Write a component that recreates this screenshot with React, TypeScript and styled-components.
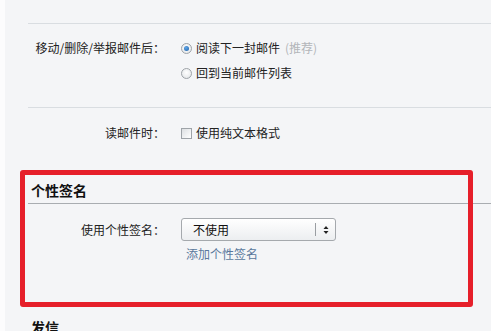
import React from "react";
import styled, { createGlobalStyle } from "styled-components";

const Global = createGlobalStyle`
  html, body { margin: 0; padding: 0; }
  body {
    width: 491px; height: 331px; overflow: hidden;
    font-family: "Noto Sans CJK SC", "Noto Sans", sans-serif;
    font-size: 12px; color: #222;
  }
`;

const Page = styled.div`
  position: relative;
  height: 331px;
  overflow: hidden;
  background: #f4f5f7;
  border-left: 5px solid #fcfcfd;
  box-sizing: border-box;
`;

const Rule = styled.div<{ $top: number }>`
  margin: ${(p) => p.$top}px 0 0 23px;
  height: 1px;
  background: #d9dde1;
`;

const FieldRow = styled.div<{ $top: number }>`
  display: grid;
  grid-template-columns: 137px 1fr;
  column-gap: 16px;
  align-items: start;
  margin: ${(p) => p.$top}px 0 0 23px;
`;

const Label = styled.div<{ $lh?: number }>`
  text-align: right;
  line-height: ${(p) => p.$lh || 20}px;
  color: #222;
  white-space: nowrap;
`;

const Options = styled.div`
  display: flex;
  flex-direction: column;
  gap: 5px;
`;

const Option = styled.label`
  display: flex;
  align-items: center;
  gap: 4px;
  line-height: 20px;
  color: #222;
  white-space: nowrap;
`;

const Radio = styled.span<{ $on?: boolean }>`
  width: 11px;
  height: 11px;
  border-radius: 50%;
  box-sizing: border-box;
  border: 1px solid #9ea3a8;
  background: radial-gradient(circle at 50% 40%, #ffffff, #dfe2e5);
  display: flex;
  align-items: center;
  justify-content: center;
  &::after {
    content: "";
    display: ${(p) => (p.$on ? "block" : "none")};
    width: 5px;
    height: 5px;
    border-radius: 50%;
    background: radial-gradient(circle at 40% 35%, #5fa6e8, #1d5fa6);
  }
`;

const Check = styled.span`
  width: 11px;
  height: 11px;
  box-sizing: border-box;
  border: 1px solid #9ea3a8;
  background: linear-gradient(135deg, #dcdfe2, #ffffff);
`;

const Hint = styled.span`
  color: #b3b6ba;
  margin-left: 1px;
`;

const Heading = styled.div<{ $top: number; $line?: boolean }>`
  margin: ${(p) => p.$top}px 0 0 23px;
  padding: 0 0 3px 3px;
  font-size: 14px;
  font-weight: 700;
  line-height: 20px;
  color: #111;
  border-bottom: ${(p) => (p.$line ? "1px solid #a9adb1" : "none")};
`;

const Select = styled.div`
  width: 155px;
  height: 23px;
  box-sizing: border-box;
  border: 1px solid #a5a9ad;
  border-radius: 3px;
  background: linear-gradient(#ffffff, #eceef0);
  display: flex;
  align-items: center;
  padding-left: 11px;
  color: #111;
`;

const SelectText = styled.span`
  flex: 1;
  line-height: 20px;
`;

const SelectDivider = styled.span`
  width: 1px;
  height: 13px;
  background: #9a9ea2;
`;

const Arrows = styled.span`
  width: 19px;
  display: flex;
  justify-content: center;
`;

const Link = styled.a`
  display: block;
  margin: 5px 0 0 5px;
  line-height: 16px;
  color: #5a789c;
  text-decoration: none;
`;

const Annotation = styled.div`
  position: absolute;
  left: 15px;
  top: 170px;
  width: 453px;
  height: 137px;
  box-sizing: border-box;
  border: 5px solid #e61f2a;
  border-radius: 3px;
  pointer-events: none;
`;

export default function App() {
  return (
    <>
      <Global />
      <Page>
        <Rule $top={23} />
        <FieldRow $top={14}>
          <Label>移动/删除/举报邮件后：</Label>
          <Options>
            <Option>
              <Radio $on />
              阅读下一封邮件<Hint>(推荐)</Hint>
            </Option>
            <Option>
              <Radio />
              回到当前邮件列表
            </Option>
          </Options>
        </FieldRow>
        <Rule $top={24} />
        <FieldRow $top={15}>
          <Label>读邮件时：</Label>
          <Option>
            <Check />
            使用纯文本格式
          </Option>
        </FieldRow>
        <Heading $top={37} $line>
          个性签名
        </Heading>
        <FieldRow $top={14}>
          <Label $lh={23}>使用个性签名：</Label>
          <div>
            <Select>
              <SelectText>不使用</SelectText>
              <SelectDivider />
              <Arrows>
                <svg width="6" height="10" viewBox="0 0 6 10">
                  <path d="M3 1 L5.5 4 H0.5 Z" fill="#222" />
                  <path d="M3 9 L5.5 6 H0.5 Z" fill="#222" />
                </svg>
              </Arrows>
            </Select>
            <Link href="#">添加个性签名</Link>
          </div>
        </FieldRow>
        <Heading $top={55}>发信</Heading>
        <Annotation />
      </Page>
    </>
  );
}
